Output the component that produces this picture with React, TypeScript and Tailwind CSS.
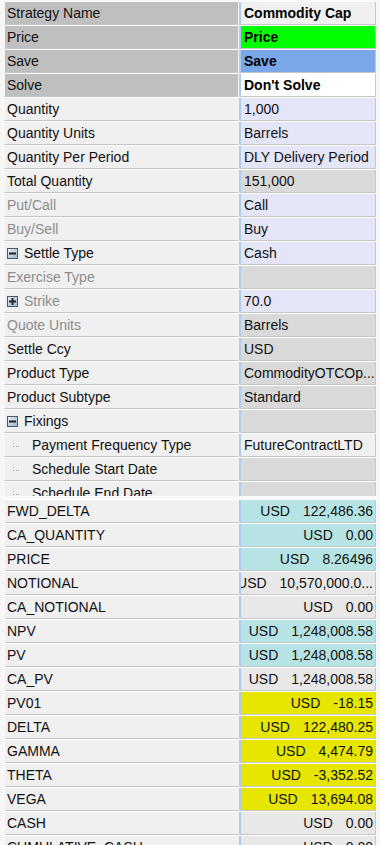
import React from "react";

type Row = {
  label: string;
  value?: string;
  bg: string;
  labelBg?: string;
  bold?: boolean;
  disabled?: boolean;
  icon?: "minus" | "plus";
  child?: boolean;
};

const topRows: Row[] = [
  { label: "Strategy Name", value: "Commodity Cap", bg: "bg-[#f0f0f0]", labelBg: "bg-[#bfbfbf]", bold: true },
  { label: "Price", value: "Price", bg: "bg-[#00ff00]", labelBg: "bg-[#bfbfbf]", bold: true },
  { label: "Save", value: "Save", bg: "bg-[#7aa7e7]", labelBg: "bg-[#bfbfbf]", bold: true },
  { label: "Solve", value: "Don't Solve", bg: "bg-white", labelBg: "bg-[#bfbfbf]", bold: true },
  { label: "Quantity", value: "1,000", bg: "bg-[#e5e5f8]" },
  { label: "Quantity Units", value: "Barrels", bg: "bg-[#e5e5f8]" },
  { label: "Quantity Per Period", value: "DLY Delivery Period", bg: "bg-[#e5e5f8]" },
  { label: "Total Quantity", value: "151,000", bg: "bg-[#d9d9d9]" },
  { label: "Put/Call", value: "Call", bg: "bg-[#e5e5f8]", disabled: true },
  { label: "Buy/Sell", value: "Buy", bg: "bg-[#e5e5f8]", disabled: true },
  { label: "Settle Type", value: "Cash", bg: "bg-[#e5e5f8]", icon: "minus" },
  { label: "Exercise Type", value: "", bg: "bg-[#d9d9d9]", disabled: true },
  { label: "Strike", value: "70.0", bg: "bg-[#e5e5f8]", disabled: true, icon: "plus" },
  { label: "Quote Units", value: "Barrels", bg: "bg-[#d9d9d9]", disabled: true },
  { label: "Settle Ccy", value: "USD", bg: "bg-[#d9d9d9]" },
  { label: "Product Type", value: "CommodityOTCOp...", bg: "bg-[#d9d9d9]" },
  { label: "Product Subtype", value: "Standard", bg: "bg-[#d9d9d9]" },
  { label: "Fixings", value: "", bg: "bg-[#d9d9d9]", icon: "minus" },
  { label: "Payment Frequency Type", value: "FutureContractLTD", bg: "bg-[#f0f0f0]", child: true },
  { label: "Schedule Start Date", value: "", bg: "bg-[#d9d9d9]", child: true },
  { label: "Schedule End Date", value: "", bg: "bg-[#d9d9d9]", child: true },
];

type Res = { label: string; num: string; bg: string };

const cyan = "bg-[#b6e4e4]";
const yel = "bg-[#e6e600]";
const gry = "bg-[#e8e8e8]";

const bottomRows: Res[] = [
  { label: "FWD_DELTA", num: "122,486.36", bg: cyan },
  { label: "CA_QUANTITY", num: "0.00", bg: cyan },
  { label: "PRICE", num: "8.26496", bg: cyan },
  { label: "NOTIONAL", num: "10,570,000.0...", bg: gry },
  { label: "CA_NOTIONAL", num: "0.00", bg: gry },
  { label: "NPV", num: "1,248,008.58", bg: cyan },
  { label: "PV", num: "1,248,008.58", bg: cyan },
  { label: "CA_PV", num: "1,248,008.58", bg: gry },
  { label: "PV01", num: "-18.15", bg: yel },
  { label: "DELTA", num: "122,480.25", bg: yel },
  { label: "GAMMA", num: "4,474.79", bg: yel },
  { label: "THETA", num: "-3,352.52", bg: yel },
  { label: "VEGA", num: "13,694.08", bg: yel },
  { label: "CASH", num: "0.00", bg: gry },
  { label: "CUMULATIVE_CASH", num: "0.00", bg: gry },
];

function ExpIcon({ kind }: { kind: "minus" | "plus" }) {
  return (
    <svg width="11" height="11" viewBox="0 0 11 11" className="mr-[6px] shrink-0">
      <defs>
        <linearGradient id={`g-${kind}`} x1="0" y1="0" x2="1" y2="1">
          <stop offset="0" stopColor="#e6edf5" />
          <stop offset="1" stopColor="#9fb2c6" />
        </linearGradient>
      </defs>
      <rect x="0.5" y="0.5" width="10" height="10" fill={`url(#g-${kind})`} stroke="#4a5868" />
      <rect x="2" y="4.5" width="7" height="2" fill="#1e2630" />
      {kind === "plus" && <rect x="4.5" y="2" width="2" height="7" fill="#1e2630" />}
    </svg>
  );
}

function TreeDots() {
  return (
    <svg width="8" height="8" viewBox="0 0 8 8" className="ml-[6px] mr-[11px] shrink-0">
      <rect x="0" y="2" width="1" height="1" fill="#a0a0a0" />
      <rect x="0" y="5" width="1" height="1" fill="#a0a0a0" />
      <rect x="3" y="5" width="1" height="1" fill="#a0a0a0" />
      <rect x="5" y="5" width="1" height="1" fill="#a0a0a0" />
    </svg>
  );
}

function TopRow({ r }: { r: Row }) {
  return (
    <div className="flex h-[24px] pl-[5px] pr-[4px]">
      <div
        className={`w-[233px] flex items-center pl-[2px] border-t border-t-white border-b border-b-[#c6c6c6] whitespace-nowrap overflow-hidden ${
          r.labelBg ?? "bg-[#f0f0f0]"
        } ${r.disabled ? "text-[#8d8d8d]" : "text-[#111]"}`}
      >
        {r.icon && <ExpIcon kind={r.icon} />}
        {r.child && <TreeDots />}
        {r.label}
      </div>
      <div className="w-[1px] bg-[#f4f4f4]" />
      <div className="flex-1 flex border-t border-t-white border-b border-b-[#c6c6c6] bg-[#f0f0f0]">
        <div
          className={`flex-1 flex items-center pl-[3px] border-l-2 border-l-[#aecbee] border-r border-r-[#aecbee] whitespace-nowrap overflow-hidden ${r.bg} ${
            r.bold ? "font-bold text-black" : "text-[#111]"
          }`}
        >
          {r.value}
        </div>
      </div>
    </div>
  );
}

function BottomRow({ r }: { r: Res }) {
  return (
    <div className="flex h-[24px] pl-[5px] pr-[4px]">
      <div className="w-[233px] flex items-center pl-[2px] border-t border-t-white border-b border-b-[#c6c6c6] bg-[#f0f0f0] text-[#111] whitespace-nowrap overflow-hidden">
        {r.label}
      </div>
      <div className="w-[1px] bg-[#f4f4f4]" />
      <div className="flex-1 flex border-t border-t-white border-b border-b-[#c6c6c6] bg-[#f0f0f0] min-w-0">
        <div
          className={`flex-1 min-w-0 flex items-center justify-end gap-[13px] pr-[2px] border-l-2 border-l-[#aecbee] border-r border-r-[#aecbee] whitespace-nowrap overflow-hidden text-[#111] ${r.bg}`}
        >
          <span className="shrink-0">USD</span>
          <span className="shrink-0">{r.num}</span>
        </div>
      </div>
    </div>
  );
}

export default function App() {
  return (
    <div className="w-[380px] h-[845px] overflow-hidden bg-[#f7f7f7] text-[14px] leading-[16px] font-['Liberation_Sans',Arial,sans-serif]">
      <div className="h-[496px] overflow-hidden pt-[1px]">
        {topRows.map((r, i) => (
          <TopRow key={i} r={r} />
        ))}
      </div>
      <div className="h-[3px] bg-[#fafafa]" />
      <div>
        {bottomRows.map((r, i) => (
          <BottomRow key={i} r={r} />
        ))}
      </div>
    </div>
  );
}
